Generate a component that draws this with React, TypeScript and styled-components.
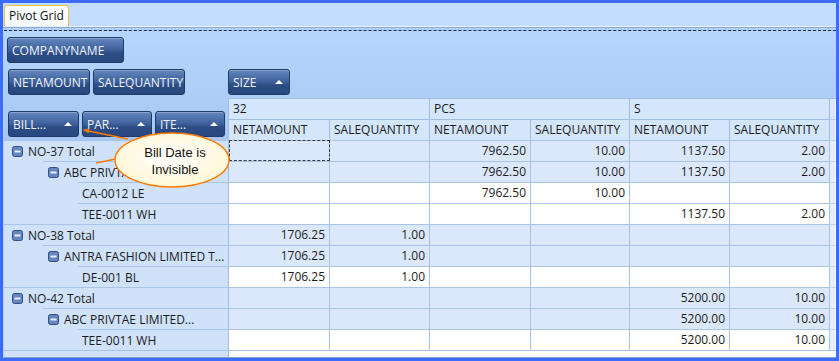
import React from 'react';
import styled, { createGlobalStyle } from 'styled-components';

type RowData = {
  label: string;
  level: 0 | 1 | 2;
  values: string[];
};

const rows: RowData[] = [
  { label: 'NO-37 Total', level: 0, values: ['', '', '7962.50', '10.00', '1137.50', '2.00'] },
  { label: 'ABC PRIVTAE LIMITED...', level: 1, values: ['', '', '7962.50', '10.00', '1137.50', '2.00'] },
  { label: 'CA-0012 LE', level: 2, values: ['', '', '7962.50', '10.00', '', ''] },
  { label: 'TEE-0011 WH', level: 2, values: ['', '', '', '', '1137.50', '2.00'] },
  { label: 'NO-38 Total', level: 0, values: ['1706.25', '1.00', '', '', '', ''] },
  { label: 'ANTRA FASHION LIMITED T...', level: 1, values: ['1706.25', '1.00', '', '', '', ''] },
  { label: 'DE-001 BL', level: 2, values: ['1706.25', '1.00', '', '', '', ''] },
  { label: 'NO-42 Total', level: 0, values: ['', '', '', '', '5200.00', '10.00'] },
  { label: 'ABC PRIVTAE LIMITED...', level: 1, values: ['', '', '', '', '5200.00', '10.00'] },
  { label: 'TEE-0011 WH', level: 2, values: ['', '', '', '', '5200.00', '10.00'] },
];

const sizes = ['32', 'PCS', 'S'];
const indent = [0, 39, 74];
const pad = [8, 5, 4];

const GlobalStyle = createGlobalStyle`
  html, body {
    margin: 0;
    padding: 0;
    background: #ffffff;
  }
  body {
    font-family: "Open Sans", "Noto Sans", sans-serif;
    font-size: 12px;
    color: #1b1b1b;
  }
`;

const MinusIcon = () => (
  <svg width="11" height="11" viewBox="0 0 11 11">
    <rect x="0.5" y="0.5" width="10" height="10" rx="2" fill="#6586bf" stroke="#2f4f86" />
    <rect x="2.5" y="4.5" width="6" height="2" fill="#e9f0fc" />
  </svg>
);

const App: React.FC = () => {
  return (
    <Frame>
      <GlobalStyle />
      <TabStrip>
        <Tab>Pivot Grid</Tab>
      </TabStrip>
      <TabBody>
        <Pivot>
          <FilterArea>
            <FieldButton $w={117}>COMPANYNAME</FieldButton>
          </FilterArea>
          <DataArea>
            <DataFields>
              <FieldButton $w={82}>NETAMOUNT</FieldButton>
              <FieldButton $w={92}>SALEQUANTITY</FieldButton>
            </DataFields>
            <FieldButton $w={62}>
              SIZE
              <SortArrow />
            </FieldButton>
          </DataArea>

          <Grid>
            <RowFieldCell>
              <FieldButton $w={71}>
                BILL...
                <SortArrow />
              </FieldButton>
              <FieldButton $w={70}>
                PAR...
                <SortArrow />
              </FieldButton>
              <FieldButton $w={70}>
                ITE...
                <SortArrow />
              </FieldButton>
            </RowFieldCell>
            {sizes.map((s) => (
              <HeaderCell key={s} $span={2}>
                {s}
              </HeaderCell>
            ))}
            <HeaderFiller $top />
            {sizes.map((s) => (
              <React.Fragment key={s}>
                <HeaderCell>NETAMOUNT</HeaderCell>
                <HeaderCell>SALEQUANTITY</HeaderCell>
              </React.Fragment>
            ))}
            <HeaderFiller />

            {rows.map((row, i) => (
              <React.Fragment key={i}>
                <RowHeader>
                  <RowLabel $indent={indent[row.level]} $pad={pad[row.level]}>
                    {row.level < 2 && <MinusIcon />}
                    <span>{row.label}</span>
                  </RowLabel>
                </RowHeader>
                {row.values.map((v, j) => (
                  <DataCell key={j} $total={row.level < 2} $focused={i === 0 && j === 0}>
                    {v}
                  </DataCell>
                ))}
                <RowFiller />
              </React.Fragment>
            ))}

            <RowHeader>
              <RowLabel $indent={0} $pad={0} />
            </RowHeader>
            <EmptyArea />
          </Grid>
        </Pivot>
      </TabBody>

      <Callout>
        <svg width="170" height="75" viewBox="70 120 170 75">
          <line x1="128" y1="139" x2="86" y2="130.5" stroke="#ff7a00" strokeWidth="1.3" />
          <polygon points="82.5,129.8 89.4,128.4 88.4,133.3" fill="#ff7a00" />
          <line x1="96" y1="163" x2="118" y2="158.5" stroke="#ff7a00" strokeWidth="1.3" />
          <defs>
            <radialGradient id="cream" cx="50%" cy="45%" r="60%">
              <stop offset="0%" stopColor="#ffffff" />
              <stop offset="100%" stopColor="#fff6d2" />
            </radialGradient>
          </defs>
          <ellipse cx="172" cy="160" rx="57" ry="27" fill="url(#cream)" stroke="#ff7a00" strokeWidth="1.4" />
        </svg>
        <CalloutText>
          Bill Date is
          <br />
          Invisible
        </CalloutText>
      </Callout>
    </Frame>
  );
};

const Frame = styled.div`
  position: relative;
  width: 839px;
  height: 361px;
  box-sizing: border-box;
  border: 3px solid #3b6bff;
  background: #c3ddff;
  display: flex;
  flex-direction: column;
  overflow: hidden;
`;

const TabStrip = styled.div`
  height: 23px;
  display: flex;
  align-items: flex-end;
  padding-left: 1px;
  border-bottom: 1px solid #e8f1fe;
  flex-shrink: 0;
`;

const Tab = styled.div`
  height: 20px;
  line-height: 19px;
  padding: 0 4px;
  background: linear-gradient(#ffffff, #f6f9fe);
  border: 1px solid #f0bf45;
  border-bottom: none;
  border-radius: 3px 3px 0 0;
  color: #111111;
`;

const TabBody = styled.div`
  flex: 1;
  display: flex;
  min-height: 0;
  border-top: 1px solid #8aa9d4;
  padding: 2px 0 0 1px;
  background: #b2d1f9;
`;

const Pivot = styled.div`
  flex: 1;
  display: flex;
  flex-direction: column;
  min-height: 0;
  overflow: hidden;
  border-top: 1px dashed #1d2c48;
  border-bottom: 1px solid #7f9fcc;
  background: linear-gradient(#b6d6fe 0px, #a7c7f2 110px, #a7c7f2 100%);
`;

const FilterArea = styled.div`
  height: 38px;
  box-sizing: border-box;
  padding: 6px 0 0 3px;
  flex-shrink: 0;
`;

const DataArea = styled.div`
  height: 29px;
  display: flex;
  align-items: flex-start;
  flex-shrink: 0;
`;

const DataFields = styled.div`
  width: 224px;
  box-sizing: border-box;
  padding-left: 4px;
  display: flex;
  gap: 3px;
`;

const FieldButton = styled.div<{ $w: number }>`
  box-sizing: border-box;
  width: ${(p) => p.$w}px;
  height: 26px;
  display: flex;
  align-items: center;
  justify-content: space-between;
  padding: 0 6px 0 4px;
  border: 1px solid #1e3a68;
  border-radius: 3px;
  background: linear-gradient(#6487c0 0%, #3e609a 50%, #2d4d85 62%, #284780 100%);
  box-shadow: inset 0 1px 0 rgba(255, 255, 255, 0.25);
  color: #eef3fb;
  white-space: nowrap;
`;

const SortArrow = styled.span`
  width: 0;
  height: 0;
  border-left: 4px solid transparent;
  border-right: 4px solid transparent;
  border-bottom: 4px solid #ffffff;
`;

const Grid = styled.div`
  flex: 1;
  display: grid;
  grid-template-columns: 225px 101px 100px 101px 99px 100px 100px 6px;
  grid-auto-rows: 21px;
  align-content: start;
`;

const RowFieldCell = styled.div`
  grid-row: span 2;
  box-sizing: border-box;
  height: 42px;
  border-right: 1px solid #a3bde0;
  display: flex;
  align-items: flex-end;
  gap: 3px;
  padding: 0 0 3px 4px;
`;

const HeaderCell = styled.div<{ $span?: number }>`
  grid-column: span ${(p) => p.$span ?? 1};
  box-sizing: border-box;
  border-top: 1px solid #a3bde0;
  border-right: 1px solid #a3bde0;
  background: #d4e6fc;
  padding-left: 4px;
  line-height: 20px;
  white-space: nowrap;
  overflow: hidden;
`;

const HeaderFiller = styled.div<{ $top?: boolean }>`
  border-top: 1px solid ${(p) => (p.$top ? '#a3bde0' : '#b8cfee')};
  background: #d8e7fa;
  box-shadow: inset -1px 0 0 #eef4fd;
`;

const RowHeader = styled.div`
  box-sizing: border-box;
  background: #cfe2fa;
  border-right: 1px solid #a3bde0;
  display: flex;
`;

const RowLabel = styled.div<{ $indent: number; $pad: number }>`
  flex: 1;
  margin-left: ${(p) => p.$indent}px;
  padding-left: ${(p) => p.$pad}px;
  border-top: 1px solid #a9c4e8;
  display: flex;
  align-items: center;
  gap: 5px;
  white-space: nowrap;
  overflow: hidden;

  svg {
    flex-shrink: 0;
  }
`;

const DataCell = styled.div<{ $total: boolean; $focused: boolean }>`
  box-sizing: border-box;
  border-top: 1px solid #a9c3e6;
  border-right: 1px solid #a9c3e6;
  background: ${(p) => (p.$total ? '#dbe8fb' : '#ffffff')};
  text-align: right;
  padding-right: 4px;
  line-height: 20px;
  outline: ${(p) => (p.$focused ? '1px dashed #3a3a3a' : 'none')};
  outline-offset: -1px;
`;

const RowFiller = styled.div`
  border-top: 1px solid #c4d7f0;
  background: #e3edfb;
  box-shadow: inset -1px 0 0 #f4f8fe;
`;

const EmptyArea = styled.div`
  grid-column: span 7;
  border-top: 1px solid #a9c3e6;
  background: #ffffff;
`;

const Callout = styled.div`
  position: absolute;
  left: 67px;
  top: 117px;
  width: 170px;
  height: 75px;
`;

const CalloutText = styled.div`
  position: absolute;
  left: 45px;
  top: 24px;
  width: 120px;
  text-align: center;
  font-family: "Liberation Sans", Arial, sans-serif;
  font-size: 13px;
  line-height: 17px;
  color: #111111;
`;

export default App;
